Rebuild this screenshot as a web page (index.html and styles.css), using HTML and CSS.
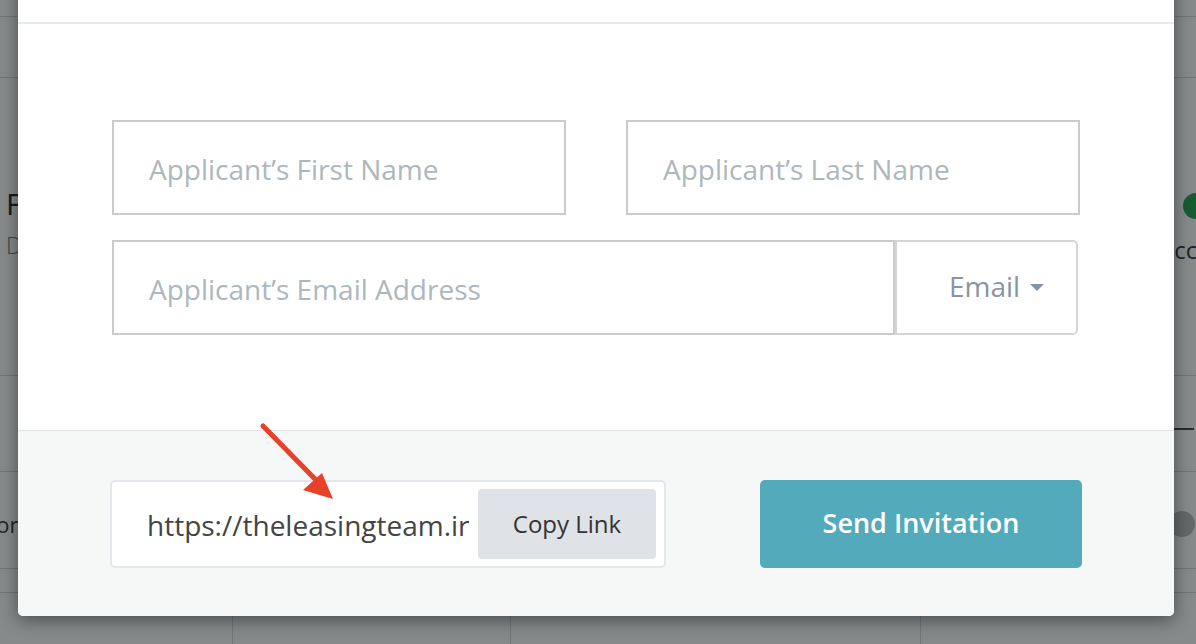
FILE: index.html
```html
<!DOCTYPE html>
<html lang="en">
<head>
  <meta charset="UTF-8">
  <meta name="viewport" content="width=device-width, initial-scale=1.0">
  <title>Invite Applicant</title>
  <link rel="stylesheet" href="styles.css">
</head>
<body>
  <!-- page behind the dialog -->
  <div class="page">
    <div class="page-row row-top"></div>
    <div class="page-row row-nav"></div>
    <section class="page-row row-summary">
      <div class="summary-title">
        <h2>Flat 4B, Riverside Court</h2>
        <p>Draft listing</p>
      </div>
      <div class="summary-status">
        <span class="dot dot-green"></span>
        <span class="status-label">Account</span>
      </div>
    </section>
    <div class="page-row row-tabs">
      <span class="tab-mark"></span>
    </div>
    <div class="page-row row-item">
      <span class="item-name">Floor</span>
      <span class="dot dot-grey"></span>
    </div>
    <div class="page-row row-head"></div>
    <div class="page-grid">
      <div class="cell cell-a"></div>
      <div class="cell cell-b"></div>
      <div class="cell cell-c"></div>
      <div class="cell"></div>
    </div>
  </div>

  <div class="overlay"></div>

  <div class="modal">
    <div class="modal-header"></div>

    <form class="modal-body">
      <div class="name-row">
        <input class="field" type="text" placeholder="Applicant’s First Name">
        <input class="field" type="text" placeholder="Applicant’s Last Name">
      </div>
      <div class="contact-row">
        <input class="field field-email" type="text" placeholder="Applicant’s Email Address">
        <button type="button" class="channel">Email <span class="caret"></span></button>
      </div>
    </form>

    <div class="modal-footer">
      <div class="link-box">
        <span class="link-url">https://theleasingteam.ir</span>
        <button type="button" class="copy-btn">Copy Link</button>
      </div>
      <button type="button" class="send-btn">Send Invitation</button>
    </div>
  </div>

  <!-- annotation arrow -->
  <svg class="pointer" width="90" height="90" viewBox="0 0 90 90">
    <line x1="5" y1="6" x2="57" y2="59" stroke="#e8412a" stroke-width="5" stroke-linecap="round"/>
    <polygon points="45,70 64,53 75,79" fill="#e8412a"/>
  </svg>
</body>
</html>
```

FILE: styles.css
```css
/* General Styles */
* {
  box-sizing: border-box;
}

body {
  margin: 0;
  padding: 0;
  width: 1196px;
  height: 644px;
  overflow: hidden;
  position: relative;
  background-color: #ffffff;
  font-family: "Open Sans", "Liberation Sans", Arial, sans-serif;
  color: #333;
}

/* Page behind the dialog */
.page {
  display: flex;
  flex-direction: column;
  height: 100%;
}

.page-row {
  border-bottom: 1px solid #d3d7da;
  flex-shrink: 0;
}

.row-top {
  height: 17px;
}

.row-nav {
  height: 61px;
}

.row-summary {
  height: 298px;
  display: flex;
  justify-content: space-between;
  padding: 106px 0 0 6px;
}

.summary-title h2 {
  margin: 0;
  font-size: 30px;
  font-weight: 400;
  color: #1e1e1e;
  line-height: 1.3;
}

.summary-title p {
  margin: 6px 0 0;
  font-size: 23px;
  color: #777;
  font-weight: 300;
}

.summary-status {
  display: flex;
  flex-direction: column;
  align-items: flex-start;
  width: 64px;
  margin-right: -30px;
  padding-top: 9px;
}

.dot {
  display: block;
  width: 26px;
  height: 26px;
  border-radius: 50%;
}

.dot-green {
  background-color: #1fa24a;
  margin-left: 21px;
}

.dot-grey {
  background-color: #bcbcbc;
}

.status-label {
  margin: 14px 0 0 -3px;
  font-size: 24px;
  color: #333;
}

.row-tabs {
  height: 96px;
  display: flex;
  justify-content: flex-end;
  padding-top: 52px;
}

.tab-mark {
  width: 20px;
  height: 2px;
  background-color: #444;
  margin-right: 2px;
}

.row-item {
  height: 97px;
  display: flex;
  align-items: center;
  justify-content: space-between;
  padding-top: 8px;
}

.item-name {
  font-size: 22px;
  color: #333;
  margin-left: -34px;
}

.row-item .dot-grey {
  margin-right: 1px;
}

.row-head {
  height: 24px;
}

.page-grid {
  flex: 1;
  display: grid;
  grid-template-columns: 233px 278px 410px 1fr;
}

.cell-a,
.cell-b,
.cell-c {
  border-right: 1px solid #d3d7da;
}

.overlay {
  position: absolute;
  inset: 0;
  background-color: rgba(13, 21, 23, 0.5);
}

/* Dialog */
.modal {
  position: absolute;
  left: 18px;
  top: -60px;
  width: 1156px;
  background-color: #ffffff;
  border-radius: 5px;
  overflow: hidden;
  box-shadow: 0 4px 18px rgba(0, 0, 0, 0.45);
}

.modal-header {
  height: 84px;
  border-bottom: 2px solid #e4e9ec;
}

.modal-body {
  margin: 0;
  padding: 96px 94px 95px;
}

.name-row {
  display: grid;
  grid-template-columns: 1fr 1fr;
  gap: 60px;
}

.contact-row {
  display: flex;
  margin-top: 25px;
  padding-right: 2px;
}

.field {
  height: 95px;
  width: 100%;
  border: 2px solid #c9cbcd;
  border-radius: 0;
  padding: 3px 35px 0;
  font-family: inherit;
  font-size: 28px;
  font-weight: 400;
  color: #333;
  background-color: #ffffff;
  outline: none;
}

.field::placeholder {
  color: #adb7bc;
}

.field-email {
  flex: 1;
  width: auto;
}

.channel {
  width: 183px;
  height: 95px;
  flex-shrink: 0;
  border: 2px solid #d3d5d7;
  border-radius: 0 5px 5px 0;
  background-color: #ffffff;
  font-family: inherit;
  font-size: 28px;
  font-weight: 400;
  color: #8795a0;
  padding: 0 0 4px 20px;
  display: flex;
  align-items: center;
  justify-content: center;
  gap: 10px;
}

.caret {
  width: 0;
  height: 0;
  border-left: 7px solid transparent;
  border-right: 7px solid transparent;
  border-top: 7px solid #8795a0;
  margin-top: 4px;
}

.modal-footer {
  border-top: 1px solid #e1e4e6;
  background-color: #f6f8f8;
  display: flex;
  justify-content: space-between;
  padding: 49px 92px 48px;
}

.link-box {
  width: 556px;
  height: 88px;
  display: flex;
  align-items: center;
  justify-content: space-between;
  border: 2px solid #e3e6ea;
  border-radius: 5px;
  background-color: #ffffff;
  padding: 8px 8px 8px 35px;
}

.link-url {
  font-size: 28px;
  font-weight: 400;
  color: #444;
  white-space: nowrap;
  padding-top: 2px;
}

.copy-btn {
  width: 178px;
  height: 70px;
  border: none;
  border-radius: 4px;
  background-color: #dfe2e6;
  font-family: inherit;
  font-size: 24px;
  font-weight: 400;
  color: #333;
  padding: 0 0 2px;
}

.send-btn {
  width: 322px;
  height: 88px;
  border: none;
  border-radius: 5px;
  background-color: #52aabb;
  font-family: inherit;
  font-size: 27px;
  font-weight: 600;
  color: #ffffff;
  padding: 0 0 4px;
}

.pointer {
  position: absolute;
  left: 258px;
  top: 420px;
}
```
